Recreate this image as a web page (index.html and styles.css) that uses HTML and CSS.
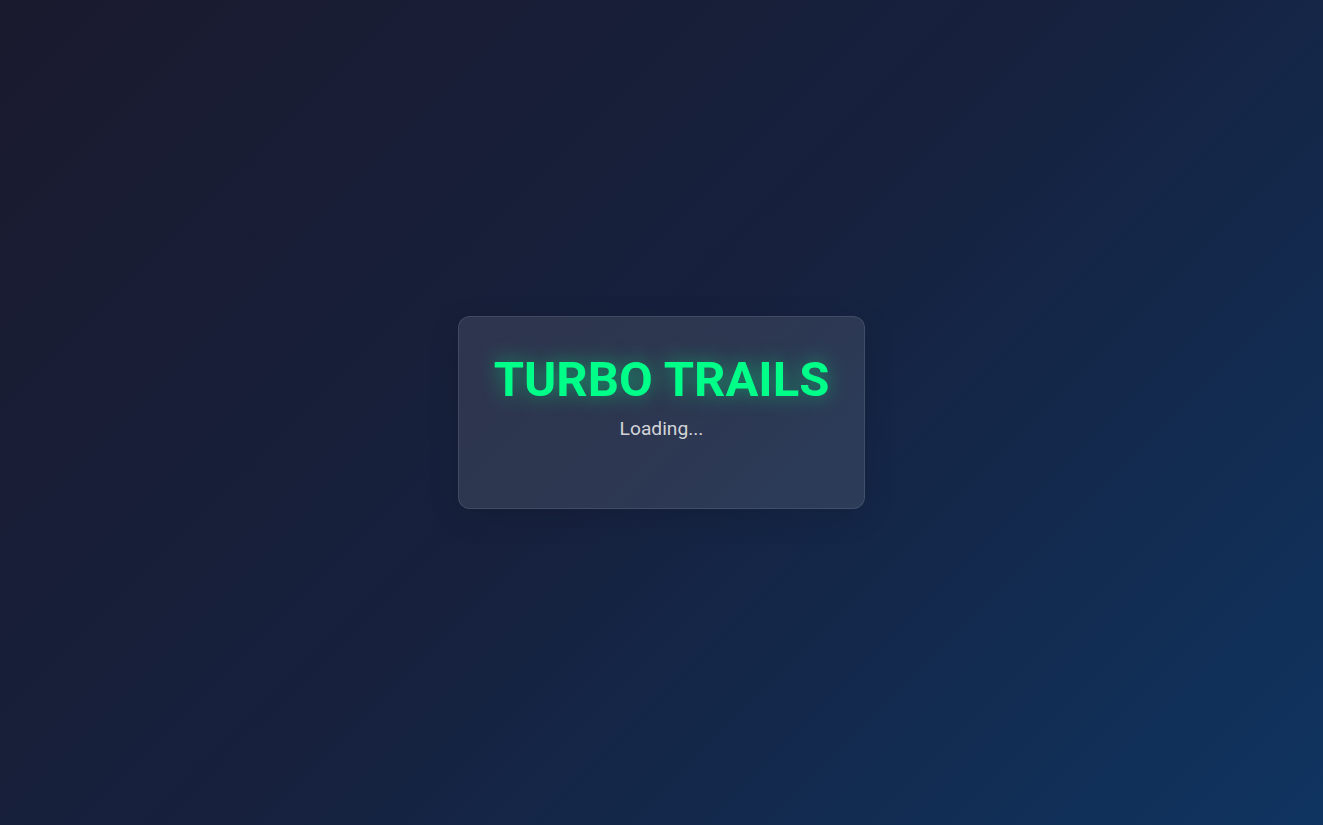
FILE: index.html
```html
<!DOCTYPE html>
<html lang="en">
<head>
<meta charset="utf-8">
<title>Turbo Trails</title>
<link rel="stylesheet" href="styles.css">
</head>
<body>
<main class="screen">
  <div class="loader-card">
    <h1 class="title">TURBO TRAILS</h1>
    <p class="status">Loading...</p>
    <div class="progress"><div class="progress-fill"></div></div>
  </div>
</main>
</body>
</html>
```
FILE: styles.css
```css
* { box-sizing: border-box; }
html, body {
  margin: 0;
  height: 100%;
}
body {
  font-family: Roboto, "Liberation Sans", sans-serif;
  background: linear-gradient(135deg, #1a1a2e 0%, #16213e 50%, #0f3460 100%);
  color: #fff;
  overflow: hidden;
}
.screen {
  height: 100%;
  display: flex;
  align-items: center;
  justify-content: center;
}
.loader-card {
  background: rgba(255, 255, 255, 0.1);
  border: 1px solid rgba(255, 255, 255, 0.1);
  border-radius: 12px;
  padding: 34px 35px;
  text-align: center;
  box-shadow: 0 8px 32px rgba(0, 0, 0, 0.12);
}
.title {
  margin: 0;
  font-size: 49px;
  font-weight: 700;
  line-height: 1.2;
  color: #00ff88;
  text-shadow: 0 0 20px rgba(0, 255, 136, 0.5);
}
.status {
  margin: 7px 0 0;
  font-size: 19.2px;
  line-height: 1.4;
  color: rgba(255, 255, 255, 0.8);
}
.progress {
  margin-top: 23px;
  height: 8px;
  border-radius: 4px;
}
.progress-fill {
  width: 0;
  height: 100%;
}
```
